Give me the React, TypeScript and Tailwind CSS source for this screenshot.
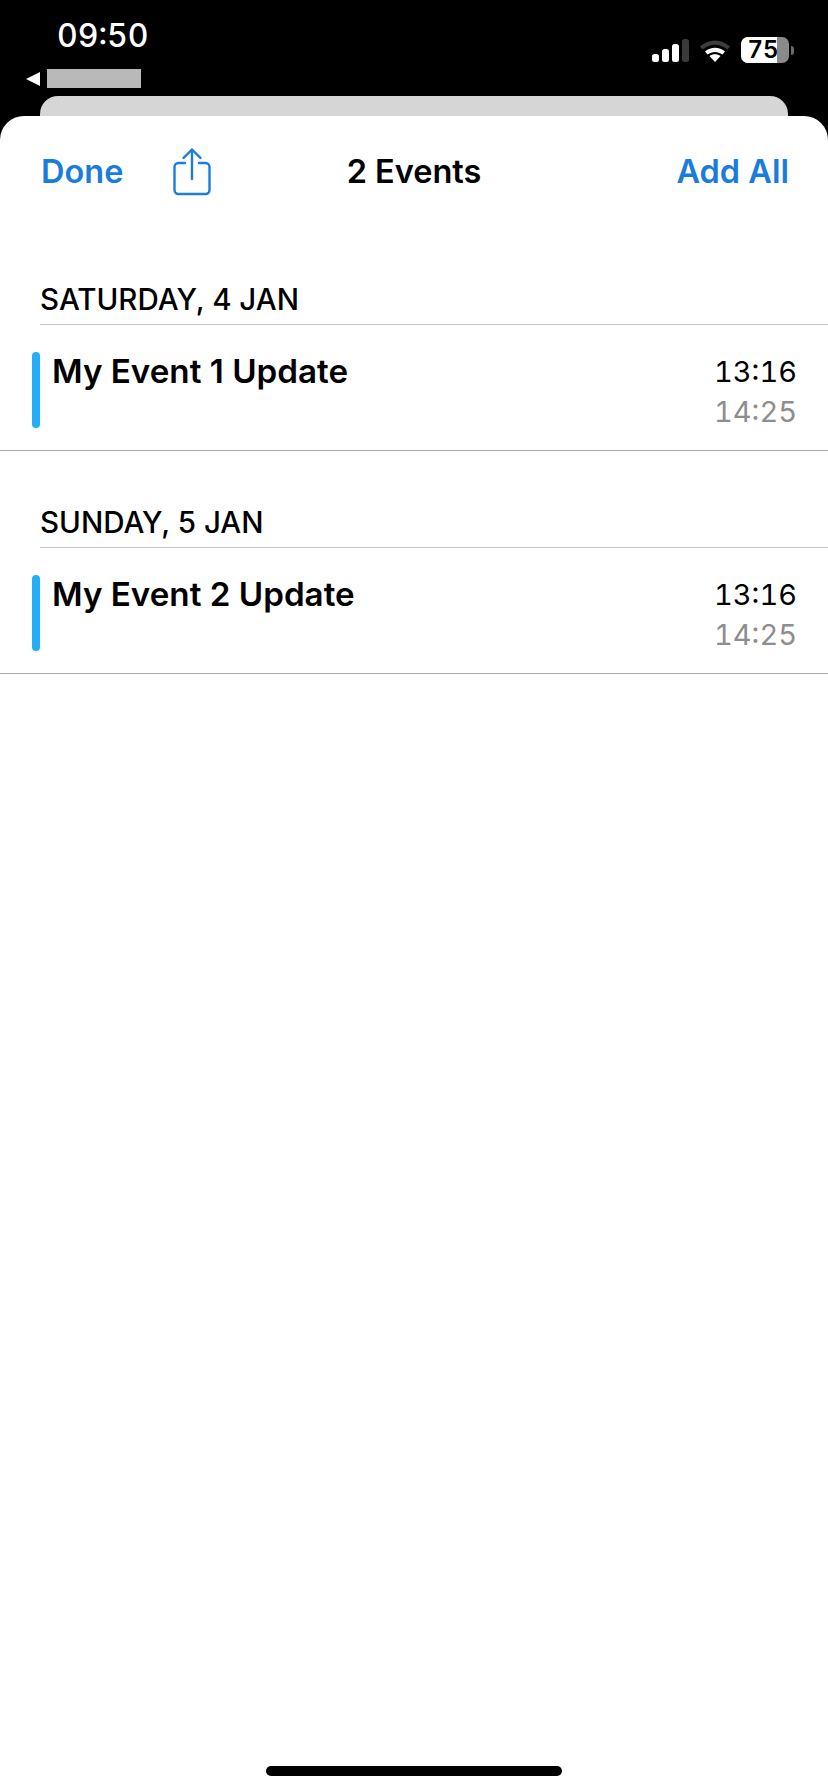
const events = [
  { date: 'SATURDAY, 4 JAN', title: 'My Event 1 Update', start: '13:16', end: '14:25' },
  { date: 'SUNDAY, 5 JAN', title: 'My Event 2 Update', start: '13:16', end: '14:25' },
];

function SignalIcon() {
  return (
    <svg width="37" height="23" viewBox="0 0 37 23">
      <rect x="0" y="15" width="7" height="8" rx="2.5" fill="#fff" />
      <rect x="10" y="10" width="7" height="13" rx="2.5" fill="#fff" />
      <rect x="20" y="5" width="7" height="18" rx="2.5" fill="#fff" />
      <rect x="30" y="0" width="7" height="23" rx="2.5" fill="#3a3a3a" />
    </svg>
  );
}

function WifiIcon() {
  return (
    <svg width="32" height="23" viewBox="0 0 32 23">
      <path d="M1 7.5 C9.5 -0.5 22.5 -0.5 31 7.5 L28.5 10.5 C21 4 11 4 3.5 10.5 Z" fill="#3d3d3d" />
      <path d="M6 12.5 C12 7.5 20 7.5 26 12.5 L23.5 15.5 C19 12 13 12 8.5 15.5 Z" fill="#fff" />
      <path d="M10.5 17 C13.5 14.8 18.5 14.8 21.5 17 L16 23 Z" fill="#fff" />
    </svg>
  );
}

function BatteryIcon() {
  return (
    <div className="flex items-center gap-[2px]">
      <div className="relative flex h-[26px] w-[48px] rounded-[7px] bg-[#8a8a8a]">
        <div className="h-full w-[36px] rounded-l-[7px] bg-white" />
        <span className="absolute inset-0 flex items-center justify-center pr-[4px] text-[24px] font-semibold leading-none tabular-nums text-black">75</span>
      </div>
      <div className="h-[9px] w-[3px] rounded-r-full bg-[#6a6a6a]" />
    </div>
  );
}

function ShareIcon() {
  return (
    <svg width="38" height="48" viewBox="0 0 38 48" fill="none" stroke="#1a7ddc" strokeWidth="2.4" strokeLinecap="round" strokeLinejoin="round">
      <path d="M12 15 H5.5 A4 4 0 0 0 1.5 19 V42 A4 4 0 0 0 5.5 46 H32.5 A4 4 0 0 0 36.5 42 V19 A4 4 0 0 0 32.5 15 H26" />
      <path d="M19 31 V2" />
      <path d="M10.5 10 L19 1.5 L27.5 10" />
    </svg>
  );
}

export default function App() {
  return (
    <div className="flex h-[1792px] w-[828px] flex-col overflow-hidden bg-black font-['Inter',sans-serif] antialiased">
      <div className="relative h-[116px] shrink-0">
        <div className="flex h-[55px] items-start justify-between pl-[57px] pr-[34px] pt-[16px]">
          <span className="text-[32px] font-medium leading-[40px] tabular-nums text-white">09:50</span>
          <div className="mt-[21px] flex items-center gap-[10px]">
            <SignalIcon />
            <WifiIcon />
            <BatteryIcon />
          </div>
        </div>
        <div className="mt-[14px] flex items-center gap-[7px] pl-[26px]">
          <div className="h-0 w-0 border-y-[7px] border-r-[14px] border-y-transparent border-r-white" />
          <div className="h-[19px] w-[94px] bg-[#b9b9b9]" />
        </div>
        <div className="absolute bottom-0 left-[40px] right-[40px] h-[20px] rounded-t-[18px] bg-[#d6d6d6]" />
      </div>

      <div className="flex flex-1 flex-col rounded-t-[24px] bg-white">
        <div className="relative flex h-[112px] items-center justify-between pl-[41px] pr-[39px]">
          <div className="flex items-center gap-[50px]">
            <span className="text-[32.5px] font-semibold text-[#1a7ddc]">Done</span>
            <ShareIcon />
          </div>
          <span className="absolute inset-x-0 text-center text-[32.5px] font-semibold text-black">2 Events</span>
          <span className="text-[32.5px] font-semibold text-[#1a7ddc]">Add All</span>
        </div>

        <div className="flex flex-col">
          {events.map((ev) => (
            <div key={ev.title} className="pt-[53px]">
              <div className="ml-[40px] border-b border-[#c6c6c6] pb-[7px] text-[29.5px] font-medium leading-[36px] text-black">
                {ev.date}
              </div>
              <div className="flex h-[126px] items-start justify-between border-b border-[#a8a8a8] pl-[32px] pr-[31px] pt-[27px]">
                <div className="flex gap-[12px]">
                  <div className="h-[76px] w-[8px] rounded-full bg-[#25aef5]" />
                  <span className="text-[33.2px] font-semibold leading-[38px] text-black">{ev.title}</span>
                </div>
                <div className="flex flex-col items-end text-[29px] leading-[40px] tabular-nums">
                  <span className="text-black">{ev.start}</span>
                  <span className="text-[#8e8e8e]">{ev.end}</span>
                </div>
              </div>
            </div>
          ))}
        </div>

        <div className="mt-auto flex justify-center pb-[16px]">
          <div className="h-[10px] w-[296px] rounded-full bg-black" />
        </div>
      </div>
    </div>
  );
}
